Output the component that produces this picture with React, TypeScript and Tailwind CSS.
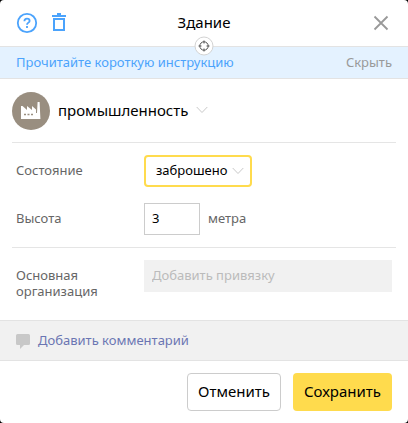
import React from "react";

function Chevron() {
  return (
    <svg width="12" height="8" viewBox="0 0 12 8" fill="none" stroke="#c8c8c8" aria-hidden="true">
      <path d="M.7 1 6 6.5 11.3 1" />
    </svg>
  );
}

export default function App() {
  return (
    <div className="bg-black font-['Noto_Sans',sans-serif] text-[13px] leading-4 text-[#666]">
      <form className="rounded bg-white" onSubmit={(e) => e.preventDefault()}>
        <header className="relative grid h-[46px] grid-cols-[1fr_auto_1fr] items-center px-4">
          <div className="flex items-center gap-3">
            <button type="button" aria-label="Справка">
              <svg width="22" height="22" viewBox="0 0 22 22" fill="none" stroke="#4ba3fc" strokeWidth="1.8">
                <circle cx="11" cy="11" r="9.2" />
                <path d="M8.4 9.2c0-1.6 1-2.6 2.6-2.6s2.6 1 2.6 2.3c0 1.8-2.6 1.7-2.6 3.9M11 14v2" />
              </svg>
            </button>
            <button type="button" aria-label="Удалить">
              <svg width="18" height="22" viewBox="0 0 18 22" fill="none" stroke="#4ba3fc" strokeWidth="2">
                <path d="M2 4h14M7 2h4M4 7h10v11H4z" />
              </svg>
            </button>
          </div>
          <h1 className="pb-0.5 text-[15px] leading-6 text-black">Здание</h1>
          <button type="button" aria-label="Закрыть" className="justify-self-end">
            <svg width="22" height="22" viewBox="0 0 22 22" stroke="#999" strokeWidth="1.8">
              <path d="m4.5 4.5 13 13m0-13-13 13" />
            </svg>
          </button>
          <button
            type="button"
            aria-label="Центрировать"
            className="absolute top-full left-1/2 -translate-x-1/2 -translate-y-1/2"
          >
            <svg width="20" height="20" viewBox="0 0 20 20" fill="none">
              <circle cx="10" cy="10" r="9" fill="#fff" stroke="#d3d3d3" />
              <circle cx="10" cy="10" r="4.2" stroke="#555" />
              <path d="M10 4.5v3m0 5v3M4.5 10h3m5 0h3" stroke="#555" />
            </svg>
          </button>
        </header>

        <div className="flex h-[33px] items-center justify-between border-y border-[#e3e3e3] bg-[#e4f2ff] px-4 pb-0.5">
          <a href="#help" className="text-[#4ba3fc]">Прочитайте короткую инструкцию</a>
          <button type="button" className="text-[#999]">Скрыть</button>
        </div>

        <div className="px-3">
          <button type="button" className="flex h-16 w-full items-center gap-2 border-b border-[#e5e5e5] text-[15px] leading-6 text-black">
            <svg width="38" height="38" viewBox="0 0 38 38" aria-hidden="true">
              <circle cx="19" cy="19" r="19" fill="#998e80" />
              <path fill="#fff" d="M9 27V14h1.5l4.5 4v-4l5 4v-4l4 3.5V21h1l.6-11h2l.8 17z" />
              <path stroke="#998e80" strokeWidth="1.5" d="M12 22.5h2m1.5 0h2m1.5 0h2" />
            </svg>
            <span className="flex items-center gap-2 pb-0.5">
              промышленность
              <Chevron />
            </span>
          </button>

          <div className="grid grid-cols-[128px_1fr] items-center gap-y-4 border-b border-[#e5e5e5] px-1 py-3">
            <label htmlFor="state" className="pb-0.5">Состояние</label>
            <div className="relative w-[108px]">
              <select
                id="state"
                className="h-8 w-full appearance-none rounded border-2 border-[#ffdb4d] bg-white pb-0.5 pl-2.5 text-black outline-none"
              >
                <option>заброшено</option>
              </select>
              <span className="pointer-events-none absolute inset-y-0 right-2 flex items-center">
                <Chevron />
              </span>
            </div>
            <label htmlFor="height" className="pb-0.5">Высота</label>
            <div className="flex items-center gap-2">
              <input id="height" defaultValue="3" className="h-8 w-14 border border-[#ccc] px-[7px] pb-0.5 text-black outline-none" />
              <span className="pb-0.5">метра</span>
            </div>
          </div>

          <div className="grid grid-cols-[128px_1fr] items-start px-1 pt-3 pb-[21px]">
            <label htmlFor="org" className="pt-[7px]">
              Основная организация
            </label>
            <input id="org" disabled placeholder="Добавить привязку" className="h-8 w-full bg-[#f1f1f1] px-2 pb-0.5 placeholder:text-[#bbb]" />
          </div>
        </div>

        <div className="flex h-[41px] items-center border-y border-[#e3e3e3] bg-[#f1f1f1] px-4">
          <button type="button" className="flex items-center gap-2 text-[#6b76b3]">
            <svg width="14" height="16" viewBox="0 0 14 16" fill="#c8c8c8" aria-hidden="true">
              <path d="M1.5 1h11Q14 1 14 2.5v8q0 1.500-1.5 1.5H8l-4 4v-4H1.5Q0 12 0 10.5v-8Q0 1 1.5 1z" />
            </svg>
            <span className="pb-0.5">Добавить комментарий</span>
          </button>
        </div>

        <footer className="flex justify-end gap-3 px-4 py-3 text-[15px] text-black">
          <button type="button" className="h-[38px] w-[94px] rounded border border-[#ccc] pb-0.5">Отменить</button>
          <button type="submit" className="h-[38px] w-[99px] rounded bg-[#ffdb4d] pb-0.5">Сохранить</button>
        </footer>
      </form>
    </div>
  );
}
